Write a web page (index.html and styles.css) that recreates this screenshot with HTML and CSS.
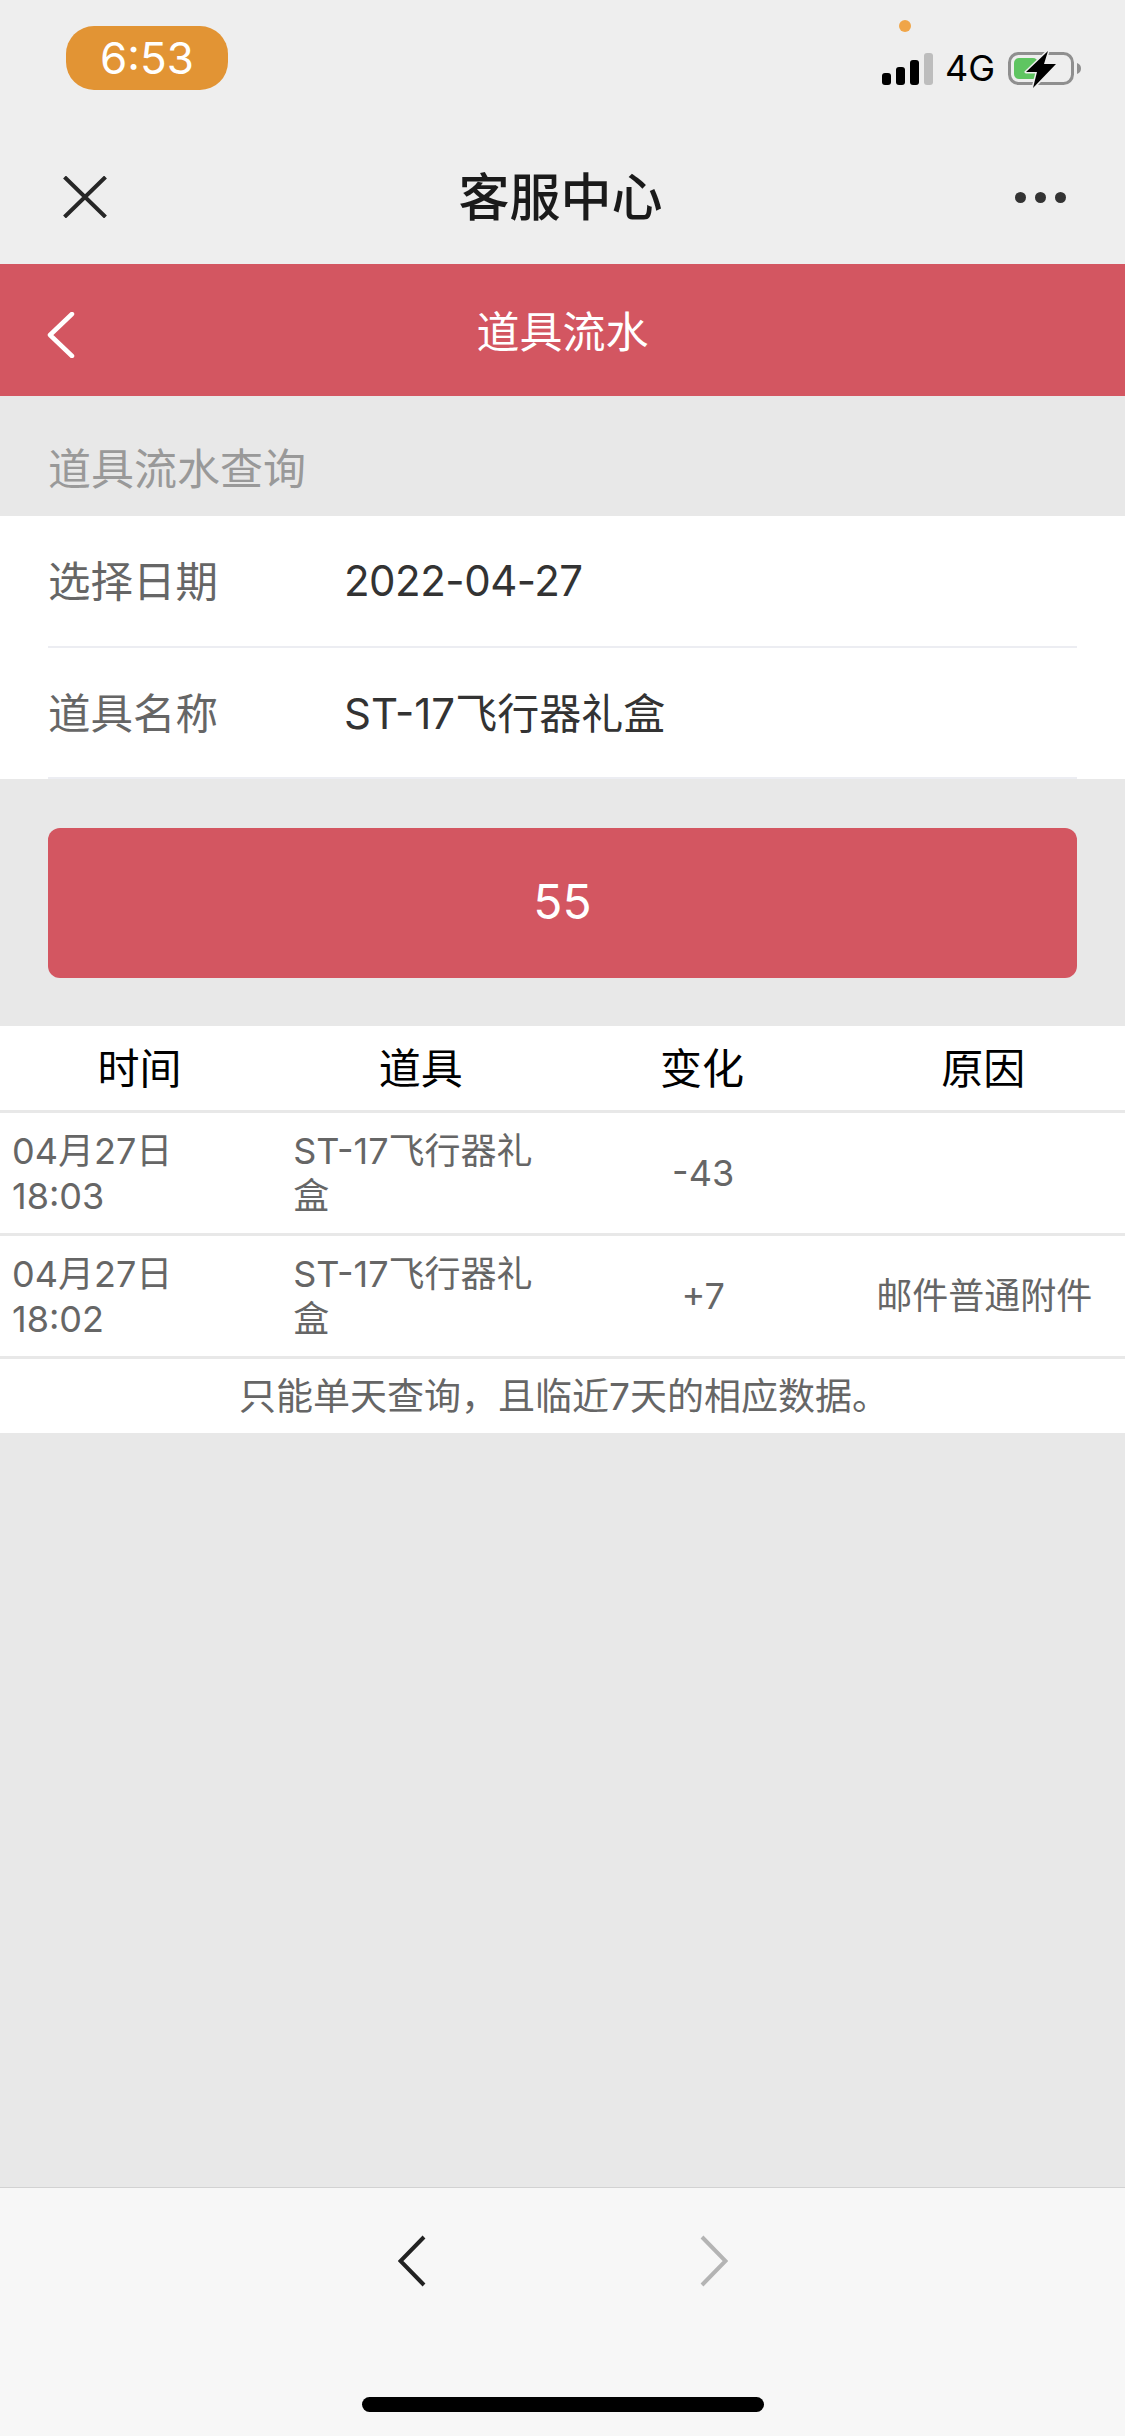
FILE: index.html
```html
<!DOCTYPE html>
<html lang="zh-CN">
<head>
    <meta charset="UTF-8" />
    <title>道具流水</title>
    <link rel="stylesheet" href="styles.css">
</head>
<body>
    <div id="wrap">
        <header class="status">
            <span class="time">6:53</span>
            <div class="status-right">
                <i class="dot"></i>
                <div class="signal"><b></b><b></b><b></b><b class="off"></b></div>
                <span class="net">4G</span>
                <svg class="battery" width="74" height="37" viewBox="0 0 74 37">
                    <rect x="1.500" y="2.500" width="63" height="30" rx="9" fill="none" stroke="#8f8f8f" stroke-width="3"/>
                    <path d="M69 12c3 1 4 3 4 5.500s-1 4.500-4 5.500z" fill="#8f8f8f"/>
                    <rect x="6" y="7" width="24" height="21" rx="5" fill="#5fc561"/>
                    <path d="M40 0L18 21H29L25 37L48 13H36z" fill="#000" stroke="#eee" stroke-width="3" paint-order="stroke" stroke-linejoin="round"/>
                </svg>
            </div>
        </header>

        <nav class="wx-nav">
            <svg class="close" width="44" height="42" viewBox="0 0 44 42">
                <path d="M1.500 1L42.500 41M42.500 1L1.500 41" fill="none" stroke="#262626" stroke-width="4"/>
            </svg>
            <h1>客服中心</h1>
            <div class="more"><i></i><i></i><i></i></div>
        </nav>

        <div class="page-head">
            <svg class="back" width="28" height="46" viewBox="0 0 28 46">
                <path d="M25 2L3 23L25 44" fill="none" stroke="#fff" stroke-width="4.500" stroke-linecap="round" stroke-linejoin="round"/>
            </svg>
            <h2>道具流水</h2>
        </div>

        <main>
            <div class="sec-title">道具流水查询</div>
            <div class="form">
                <div class="form-row">
                    <span class="form-label">选择日期</span>
                    <span class="form-value form-date">2022-04-27</span>
                </div>
                <div class="form-row">
                    <span class="form-label">道具名称</span>
                    <span class="form-value">ST-17飞行器礼盒</span>
                </div>
            </div>
            <div class="btn-wrap"><a href="javascript:;" class="btn">55</a></div>

            <table class="log">
                <thead>
                    <tr><th>时间</th><th>道具</th><th>变化</th><th>原因</th></tr>
                </thead>
                <tbody>
                    <tr>
                        <td>04月27日 18:03</td>
                        <td>ST-17飞行器礼盒</td>
                        <td class="mid">-43</td>
                        <td class="mid"></td>
                    </tr>
                    <tr>
                        <td>04月27日 18:02</td>
                        <td>ST-17飞行器礼盒</td>
                        <td class="mid">+7</td>
                        <td class="mid">邮件普通附件</td>
                    </tr>
                </tbody>
            </table>
            <p class="tip">只能单天查询，且临近7天的相应数据。</p>
        </main>

        <footer class="toolbar">
            <div class="toolbar-btns">
                <svg width="28" height="52" viewBox="0 0 28 52">
                    <path d="M26 2L2.500 26L26 50" fill="none" stroke="#222" stroke-width="4"/>
                </svg>
                <svg width="28" height="52" viewBox="0 0 28 52">
                    <path d="M2 2L25.500 26L2 50" fill="none" stroke="#b4b4b4" stroke-width="4"/>
                </svg>
            </div>
            <div class="home-bar"></div>
        </footer>
    </div>
</body>
</html>
```
FILE: styles.css
```css
html,body{
    margin: 0;
    padding: 0;
}
body{
    font-family: Inter, "Noto Sans CJK SC", sans-serif;
}
#wrap{
    width: 1125px;
    height: 2436px;
    display: flex;
    flex-direction: column;
    background: #e8e8e8;
    overflow: hidden;
}
h1,h2,p{
    margin: 0;
    font-weight: normal;
}
a{
    text-decoration: none;
}

/* status bar */
.status{
    height: 130px;
    flex: none;
    box-sizing: border-box;
    padding: 26px 43px 0 66px;
    display: flex;
    justify-content: space-between;
    align-items: flex-start;
    background: #eee;
}
.time{
    width: 162px;
    height: 64px;
    line-height: 64px;
    border-radius: 28px;
    background: #e29434;
    color: #fff;
    font-size: 44px;
    text-align: center;
}
.status-right{
    display: flex;
    align-items: flex-end;
    position: relative;
    margin-top: 26px;
    height: 33px;
}
.dot{
    position: absolute;
    left: 17px;
    top: -32px;
    width: 12px;
    height: 12px;
    border-radius: 50%;
    background: #f0a548;
}
.signal{
    display: flex;
    align-items: flex-end;
    gap: 5px;
}
.signal b{
    width: 9px;
    height: 12px;
    border-radius: 3px;
    background: #000;
}
.signal b:nth-child(2){
    height: 18px;
}
.signal b:nth-child(3){
    height: 25px;
}
.signal b:nth-child(4){
    height: 32px;
}
.signal .off{
    background: #bdbdbd;
}
.net{
    margin: 0 13px 0 12px;
    font-size: 36px;
    line-height: 33px;
    height: 33px;
    color: #000;
}
.battery{
    flex: none;
    margin-bottom: -3px;
}

/* wechat nav */
.wx-nav{
    height: 134px;
    flex: none;
    box-sizing: border-box;
    padding: 0 59px 0 63px;
    display: grid;
    grid-template-columns: 1fr auto 1fr;
    align-items: center;
    background: #eee;
}
.wx-nav h1{
    margin: 0 8px 6px 0;
    font-size: 51px;
    font-weight: 500;
    color: #1a1a1a;
}
.more{
    display: flex;
    gap: 9px;
    justify-content: flex-end;
}
.more i{
    width: 11px;
    height: 11px;
    border-radius: 50%;
    background: #333;
}

/* red head */
.page-head{
    height: 132px;
    flex: none;
    box-sizing: border-box;
    padding-left: 47px;
    display: grid;
    grid-template-columns: 1fr auto 1fr;
    padding-right: 47px;
    align-items: center;
    background: #d35661;
    color: #fff;
}
.page-head h2{
    margin-bottom: 2px;
    font-size: 43px;
}
.back{
    margin-top: 9px;
}

/* content */
main{
    flex: 1;
}
.sec-title{
    height: 120px;
    box-sizing: border-box;
    padding: 50px 48px 0;
    font-size: 43px;
    line-height: 46px;
    color: #999;
}
.form{
    background: #fff;
    padding: 0 48px;
}
.form-row{
    height: 131.500px;
    box-sizing: border-box;
    padding-bottom: 4px;
    display: flex;
    align-items: center;
    border-bottom: 2px solid #ecedf2;
    font-size: 42.500px;
}
.form-label{
    width: 296px;
    color: #666;
}
.form-value{
    font-size: 42px;
    color: #333;
}
.form-date{
    margin-top: 4px;
    letter-spacing: -0.500px;
}
.btn-wrap{
    padding: 49px 48px 48px;
}
.btn{
    display: block;
    height: 150px;
    line-height: 148px;
    border-radius: 12px;
    background: #d35661;
    color: #fff;
    font-size: 48px;
    text-align: center;
}

/* table */
.log{
    width: 100%;
    table-layout: fixed;
    border-collapse: separate;
    border-spacing: 0;
    background: #fff;
}
.log th,.log td{
    box-sizing: border-box;
    padding: 0 12px;
    border-bottom: 3px solid #e8e8e8;
}
.log th{
    height: 87px;
    padding: 0 14px 5px 12px;
    font-size: 42px;
    font-weight: normal;
    color: #000;
}
.log td{
    height: 123px;
    padding-top: 2px;
    font-size: 36px;
    line-height: 45px;
    color: #666;
}
.log td.mid{
    padding-top: 0;
    text-align: center;
}
.tip{
    height: 74px;
    padding-left: 3px;
    line-height: 76px;
    background: #fff;
    font-size: 37px;
    text-align: center;
    color: #666;
}

/* bottom toolbar */
.toolbar{
    height: 249px;
    flex: none;
    box-sizing: border-box;
    border-top: 1px solid #d2d2d2;
    padding-top: 47px;
    display: flex;
    flex-direction: column;
    align-items: center;
    background: #f7f7f7;
}
.toolbar-btns{
    width: 330px;
    display: flex;
    justify-content: space-between;
}
.toolbar-btns svg{
    display: block;
}
.home-bar{
    width: 402px;
    height: 15px;
    margin-top: 110px;
    border-radius: 8px;
    background: #000;
}
```
